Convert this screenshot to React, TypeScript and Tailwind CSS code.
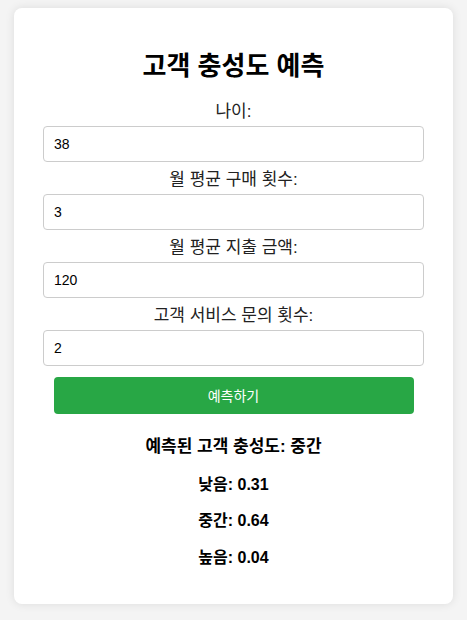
import React from 'react';

// Customer loyalty prediction form: four numeric fields, a predict button, and the result list

const fields = [
  { label: '나이:', value: '38' },
  { label: '월 평균 구매 횟수:', value: '3' },
  { label: '월 평균 지출 금액:', value: '120' },
  { label: '고객 서비스 문의 횟수:', value: '2' },
];

export default function App() {
  const [values, setValues] = React.useState<string[]>(fields.map((f) => f.value));

  return (
    <div
      className="min-h-[620px] bg-[#f4f4f4] pt-2 text-black"
      style={{ fontFamily: '"Liberation Sans", "Noto Sans CJK KR", Arial, sans-serif' }}
    >
      <div className="mx-[14px] rounded-lg bg-white px-[29px] pb-[36px] pt-[44px] shadow-[0_0_10px_rgba(0,0,0,0.1)]">
        <h2 className="text-center text-[26px] font-bold leading-[28px]">고객 충성도 예측</h2>

        <div className="mt-[22px]">
          {fields.map((f, i) => (
            <div key={f.label} className={i === 0 ? '' : 'mt-2'}>
              <label className="block text-center text-[17px] leading-5 text-[#222]">{f.label}</label>
              <input
                type="number"
                value={values[i]}
                onChange={(e) => setValues((v) => v.map((x, j) => (j === i ? e.target.value : x)))}
                className="mt-1 block h-9 w-full rounded border border-[#ccc] px-[10px] text-sm outline-none"
              />
            </div>
          ))}
        </div>

        <button className="mx-auto mt-[11px] block h-[37px] w-[360px] rounded bg-[#28a745] text-sm text-white">
          예측하기
        </button>

        <div className="mt-[23px] text-center text-base font-bold leading-5">
          <p className="text-[17px]">예측된 고객 충성도: 중간</p>
          <p className="mt-[18px]">낮음: 0.31</p>
          <p className="mt-4">중간: 0.64</p>
          <p className="mt-[17px]">높음: 0.04</p>
        </div>
      </div>
    </div>
  );
}
